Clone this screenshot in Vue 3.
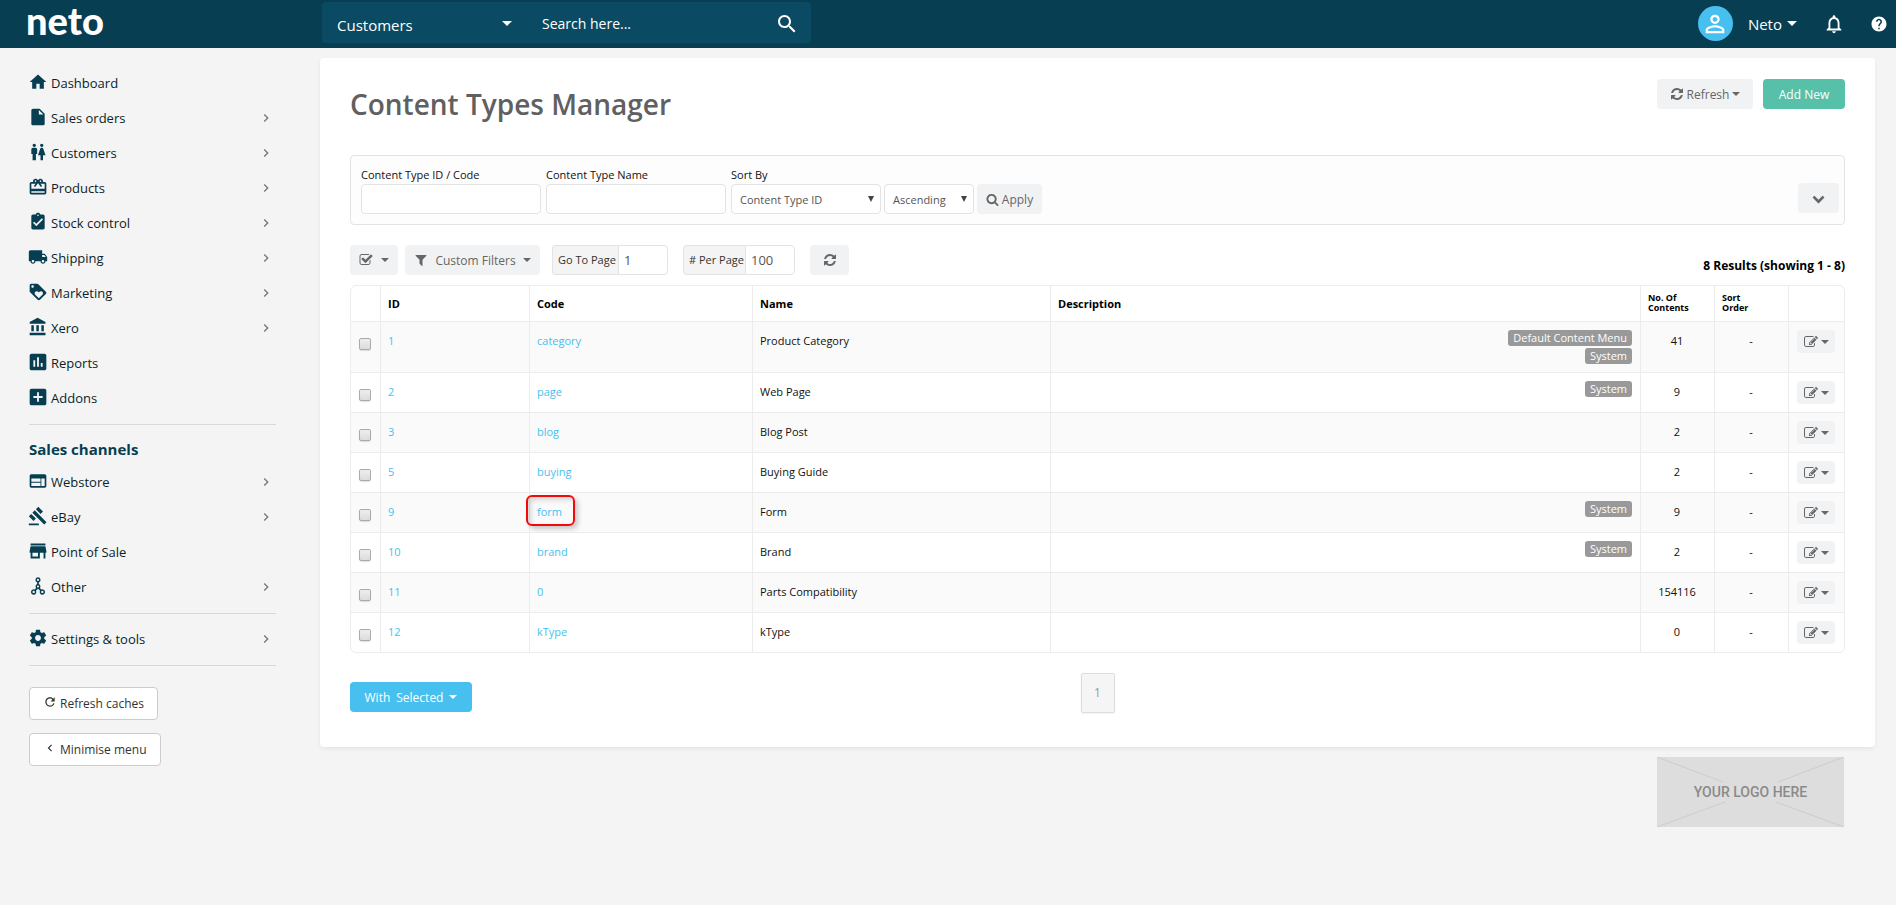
<script setup>
import { ref } from 'vue'

const icons = {
  home: 'M10 20v-6h4v6h5v-8h3L12 3 2 12h3v8z',
  file: 'M6 2c-1.1 0-1.99.9-1.99 2L4 20c0 1.1.89 2 1.99 2H18c1.1 0 2-.9 2-2V8l-6-6H6zm7 7V3.5L18.5 9H13z',
  people: 'M5.500 22v-7.500H4V9c0-1.100.9-2 2-2h3c1.100 0 2 .9 2 2v5.500H9.500V22h-4zM18 22v-6h3l-2.540-7.630C18.180 7.550 17.420 7 16.560 7h-.12c-.86 0-1.630.55-1.900 1.370L12 16h3v6h3zM7.500 6c1.110 0 2-.89 2-2s-.89-2-2-2-2 .89-2 2 .89 2 2 2zm9 0c1.110 0 2-.89 2-2s-.89-2-2-2-2 .89-2 2 .89 2 2 2z',
  gift: 'M20 6h-2.180c.11-.31.18-.65.18-1 0-1.660-1.340-3-3-3-1.050 0-1.960.54-2.500 1.350l-.5.67-.5-.68C10.960 2.540 10.050 2 9 2 7.340 2 6 3.340 6 5c0 .35.07.69.18 1H4c-1.110 0-1.990.89-1.990 2L2 19c0 1.110.89 2 2 2h16c1.110 0 2-.89 2-2V8c0-1.110-.89-2-2-2zm-5-2c.55 0 1 .45 1 1s-.45 1-1 1-1-.45-1-1 .45-1 1-1zM9 4c.55 0 1 .45 1 1s-.45 1-1 1-1-.45-1-1 .45-1 1-1zm11 15H4v-2h16v2zm0-5H4V8h5.080L7 10.830 8.620 12 11 8.760l1-1.360 1 1.360L15.380 12 17 10.830 14.920 8H20v6z',
  clipboard: 'M18 3h-3.180C14.400 1.840 13.300 1 12 1c-1.300 0-2.400.84-2.820 2H6c-1.100 0-2 .9-2 2v14c0 1.100.9 2 2 2h12c1.100 0 2-.9 2-2V5c0-1.100-.9-2-2-2zm-6 0c.55 0 1 .45 1 1s-.45 1-1 1-1-.45-1-1 .45-1 1-1zm-2 14l-4-4 1.410-1.410L10 14.170l6.590-6.590L18 9l-8 8z',
  truck: 'M20 8h-3V4H3c-1.100 0-2 .9-2 2v11h2c0 1.660 1.340 3 3 3s3-1.340 3-3h6c0 1.660 1.340 3 3 3s3-1.340 3-3h2v-5l-3-4zM6 18.500c-.83 0-1.500-.67-1.500-1.500s.67-1.500 1.500-1.500 1.500.67 1.500 1.500-.67 1.500-1.500 1.500zm13.500-9l1.960 2.500H17V9.500h2.500zm-1.500 9c-.83 0-1.500-.67-1.500-1.500s.67-1.500 1.500-1.500 1.500.67 1.500 1.500-.67 1.500-1.500 1.500z',
  tag: 'M21.410 11.580l-9-9C12.050 2.220 11.550 2 11 2H4c-1.100 0-2 .9-2 2v7c0 .55.22 1.050.59 1.420l9 9c.36.36.86.58 1.410.58.55 0 1.050-.22 1.410-.59l7-7c.37-.36.59-.86.59-1.410 0-.55-.23-1.060-.59-1.420zM5.500 7C4.670 7 4 6.330 4 5.500S4.670 4 5.500 4 7 4.670 7 5.500 6.330 7 5.500 7zm11.770 8.270L13 19.540l-4.270-4.270C8.280 14.810 8 14.190 8 13.500c0-1.380 1.120-2.500 2.500-2.500.69 0 1.320.28 1.770.74l.73.72.73-.73c.45-.45 1.080-.73 1.770-.73 1.380 0 2.500 1.120 2.500 2.500 0 .69-.28 1.320-.73 1.770z',
  bank: 'M4 10v7h3v-7H4zm6 0v7h3v-7h-3zM2 22h19v-3H2v3zm14-12v7h3v-7h-3zm-4.500-9L2 6v2h19V6l-9.500-5z',
  chart: 'M19 3H5c-1.100 0-2 .9-2 2v14c0 1.100.9 2 2 2h14c1.100 0 2-.9 2-2V5c0-1.100-.9-2-2-2zM9 17H7v-7h2v7zm4 0h-2V7h2v10zm4 0h-2v-4h2v4z',
  plus: 'M19 3H5c-1.110 0-2 .9-2 2v14c0 1.100.89 2 2 2h14c1.100 0 2-.9 2-2V5c0-1.100-.9-2-2-2zm-2 10h-4v4h-2v-4H7v-2h4V7h2v4h4v2z',
  web: 'M20 4H4c-1.100 0-1.990.9-1.990 2L2 18c0 1.100.9 2 2 2h16c1.100 0 2-.9 2-2V6c0-1.100-.9-2-2-2zm-5 14H4v-4h11v4zm0-5H4V9h11v4zm5 5h-4V9h4v9z',
  gavel: 'M1 21h12v2H1zM5.245 8.070l2.830-2.827 14.140 14.142-2.828 2.828zM12.317 1l5.657 5.656-2.830 2.830-5.654-5.660zM3.825 9.485l5.657 5.657-2.828 2.828-5.657-5.657z',
  store: 'M20 4H4v2h16V4zm1 10v-2l-1-5H4l-1 5v2h1v6h10v-6h4v6h2v-6h1zm-9 4H6v-4h6v4z',
  nodes: 'M12 1.500a3.200 3.200 0 0 1 1 6.200v1.900a3.200 3.200 0 0 1 1.300 4.900l1.600 1.800a3.200 3.200 0 1 1-1.500 1.400l-1.700-2a3.200 3.200 0 0 1-1.400 0l-1.700 2a3.200 3.200 0 1 1-1.500-1.400l1.600-1.800A3.200 3.200 0 0 1 11 9.600V7.700a3.200 3.200 0 0 1 1-6.200zm0 1.900a1.300 1.300 0 1 0 0 2.600 1.300 1.300 0 0 0 0-2.600zm0 7.900a1.300 1.300 0 1 0 0 2.600 1.300 1.300 0 0 0 0-2.600zM6.800 17.700a1.400 1.400 0 1 0 0 2.800 1.400 1.400 0 0 0 0-2.800zm10.400 0a1.400 1.400 0 1 0 0 2.800 1.400 1.400 0 0 0 0-2.800z',
  cog: 'M19.430 12.980c.04-.32.07-.64.07-.98s-.03-.66-.07-.98l2.110-1.650c.19-.15.24-.42.12-.64l-2-3.460c-.12-.22-.39-.3-.61-.22l-2.490 1c-.52-.4-1.080-.73-1.690-.98l-.38-2.650C14.460 2.180 14.250 2 14 2h-4c-.25 0-.46.18-.49.42l-.38 2.650c-.61.25-1.170.59-1.690.98l-2.490-1c-.23-.09-.49 0-.61.22l-2 3.460c-.13.22-.07.49.12.64l2.110 1.650c-.04.32-.07.65-.07.98s.03.66.07.98l-2.110 1.650c-.19.15-.24.42-.12.64l2 3.460c.12.22.39.3.61.22l2.490-1c.52.4 1.080.73 1.690.98l.38 2.650c.03.24.24.42.49.42h4c.25 0 .46-.18.49-.42l.38-2.650c.61-.25 1.170-.59 1.690-.98l2.490 1c.23.09.49 0 .61-.22l2-3.460c.12-.22.07-.49-.12-.64l-2.110-1.650zM12 15.500c-1.930 0-3.500-1.570-3.500-3.500s1.570-3.500 3.500-3.500 3.500 1.570 3.500 3.500-1.570 3.500-3.500 3.500z'
}

const tight = '1.2 1.2 21.6 21.6'

const groups = [
  {
    items: [
      { label: 'Dashboard', icon: 'home' },
      { label: 'Sales orders', icon: 'file', more: true },
      { label: 'Customers', icon: 'people', more: true },
      { label: 'Products', icon: 'gift', more: true },
      { label: 'Stock control', icon: 'clipboard', more: true },
      { label: 'Shipping', icon: 'truck', more: true },
      { label: 'Marketing', icon: 'tag', more: true },
      { label: 'Xero', icon: 'bank', more: true },
      { label: 'Reports', icon: 'chart', box: tight },
      { label: 'Addons', icon: 'plus', box: tight }
    ]
  },
  {
    title: 'Sales channels',
    items: [
      { label: 'Webstore', icon: 'web', more: true },
      { label: 'eBay', icon: 'gavel', more: true },
      { label: 'Point of Sale', icon: 'store', box: tight },
      { label: 'Other', icon: 'nodes', more: true }
    ]
  },
  { items: [{ label: 'Settings & tools', icon: 'cog', more: true }] }
]

const rows = [
  { id: 1, code: 'category', name: 'Product Category', tags: ['Default Content Menu', 'System'], count: 41 },
  { id: 2, code: 'page', name: 'Web Page', tags: ['System'], count: 9 },
  { id: 3, code: 'blog', name: 'Blog Post', tags: [], count: 2 },
  { id: 5, code: 'buying', name: 'Buying Guide', tags: [], count: 2 },
  { id: 9, code: 'form', name: 'Form', tags: ['System'], count: 9, marked: true },
  { id: 10, code: 'brand', name: 'Brand', tags: ['System'], count: 2 },
  { id: 11, code: '0', name: 'Parts Compatibility', tags: [], count: 154116 },
  { id: 12, code: 'kType', name: 'kType', tags: [], count: 0 }
]

const refreshPath = 'M1639 1056q0 5-1 7-64 268-268 434.500t-478 166.500q-146 0-282.500-55t-243.500-157l-129 129q-19 19-45 19t-45-19-19-45v-448q0-26 19-45t45-19h448q26 0 45 19t19 45-19 45l-137 137q71 66 161 102t187 36q134 0 250-65t186-179q11-17 53-117 8-23 30-23h192q13 0 22.500 9.500t9.500 22.500zm25-800v448q0 26-19 45t-45 19h-448q-26 0-45-19t-19-45 19-45l138-138q-148-137-349-137-134 0-250 65t-186 179q-11 17-53 117-8 23-30 23h-199q-13 0-22.500-9.500t-9.500-22.500v-7q65-268 270-434.500t480-166.500q146 0 284 55.500t245 156.500l130-129q19-19 45-19t45 19 19 45z'
const editPath = 'M888 1184l116-116-152-152-116 116v56h96v96h56zm440-720q-16-16-33 1l-350 350q-17 17-1 33t33-1l350-350q17-17 1-33zm80 594v190q0 119-84.500 203.500t-203.500 84.500h-832q-119 0-203.500-84.500t-84.500-203.500v-832q0-119 84.500-203.500t203.500-84.500h832q63 0 117 25 15 7 18 23 3 17-9 29l-49 49q-14 14-32 8-23-6-45-6h-832q-66 0-113 47t-47 113v832q0 66 47 113t113 47h832q66 0 113-47t47-113v-126q0-13 9-22l64-64q15-15 35-7t20 29zm-96-738l288 288-672 672h-288v-288zm444 132l-92 92-288-288 92-92q28-28 68-28t68 28l152 152q28 28 28 68t-28 68z'

const goTo = ref('1')
const perPage = ref('100')
</script>

<template>
  <div class="app">
    <header class="topbar">
      <a class="brand" href="#">neto</a>
      <form class="search" @submit.prevent>
        <div class="scope">
          <select aria-label="Search in">
            <option>Customers</option>
          </select>
          <i class="caret caret-lg"></i>
        </div>
        <input type="text" placeholder="Search here..." aria-label="Search" />
        <button type="submit" aria-label="Search">
          <svg viewBox="0 0 24 24" width="24" height="24"><path d="M15.500 14h-.79l-.28-.27C15.410 12.590 16 11.110 16 9.500 16 5.910 13.090 3 9.500 3S3 5.910 3 9.500 5.910 16 9.500 16c1.610 0 3.090-.59 4.230-1.570l.27.28v.79l5 4.990L20.490 19l-4.990-5zm-6 0C7.010 14 5 11.990 5 9.500S7.010 5 9.500 5 14 7.010 14 9.500 11.990 14 9.500 14z" /></svg>
        </button>
      </form>
      <div class="account">
        <span class="avatar">
          <svg viewBox="0 0 24 24" width="28" height="28"><path d="M12 5.900c1.160 0 2.100.94 2.100 2.100s-.94 2.100-2.100 2.100S9.900 9.160 9.900 8s.94-2.100 2.100-2.100m0 9c2.970 0 6.100 1.460 6.100 2.100v1.100H5.900V17c0-.64 3.130-2.100 6.100-2.100M12 4C9.790 4 8 5.790 8 8s1.790 4 4 4 4-1.790 4-4-1.790-4-4-4zm0 9c-2.670 0-8 1.340-8 4v3h16v-3c0-2.660-5.330-4-8-4z" /></svg>
        </span>
        <button class="user" type="button">Neto<i class="caret caret-lg"></i></button>
        <button class="bell" type="button" aria-label="Notifications">
          <svg viewBox="0 0 24 24" width="22" height="22"><path d="M12 22c1.100 0 2-.9 2-2h-4c0 1.100.9 2 2 2zm6-6v-5c0-3.070-1.630-5.640-4.500-6.320V4c0-.83-.67-1.500-1.500-1.500s-1.500.67-1.500 1.500v.68C7.640 5.360 6 7.920 6 11v5l-2 2v1h16v-1l-2-2zm-2 1H8v-6c0-2.480 1.510-4.500 4-4.500s4 2.020 4 4.500v6z" /></svg>
        </button>
        <button class="help" type="button" aria-label="Help">
          <svg viewBox="0 0 24 24" width="18" height="18"><path d="M12 2C6.480 2 2 6.480 2 12s4.480 10 10 10 10-4.480 10-10S17.520 2 12 2zm1 17h-2v-2h2v2zm2.070-7.750l-.9.92C13.450 12.900 13 13.500 13 15h-2v-.5c0-1.100.45-2.100 1.170-2.830l1.240-1.260c.37-.36.59-.86.59-1.410 0-1.100-.9-2-2-2s-2 .9-2 2H8c0-2.210 1.790-4 4-4s4 1.790 4 4c0 .88-.36 1.680-.93 2.250z" /></svg>
        </button>
      </div>
    </header>

    <div class="body">
      <nav class="sidebar">
        <section v-for="(g, i) in groups" :key="i" class="group">
          <h2 v-if="g.title">{{ g.title }}</h2>
          <ul>
            <li v-for="item in g.items" :key="item.label">
              <a href="#">
                <svg class="nav-icon" :viewBox="item.box || '0 0 24 24'" width="20" height="20"><path :d="icons[item.icon]" /></svg>
                <span>{{ item.label }}</span>
                <svg v-if="item.more" class="arrow" viewBox="0 0 24 24" width="16" height="16"><path d="M10 6L8.590 7.410 13.170 12l-4.580 4.590L10 18l6-6z" /></svg>
              </a>
            </li>
          </ul>
        </section>
        <div class="side-actions">
          <button type="button">
            <svg viewBox="0 0 24 24" width="14" height="14"><path d="M17.650 6.350C16.200 4.900 14.210 4 12 4c-4.420 0-7.990 3.580-7.990 8s3.570 8 7.990 8c3.730 0 6.840-2.550 7.730-6h-2.080c-.82 2.330-3.040 4-5.650 4-3.310 0-6-2.690-6-6s2.690-6 6-6c1.660 0 3.140.69 4.220 1.780L13 11h7V4l-2.350 2.350z" /></svg>
            Refresh caches
          </button>
          <button type="button">
            <svg viewBox="0 0 24 24" width="14" height="14"><path d="M15.410 7.410L14 6l-6 6 6 6 1.410-1.410L10.830 12z" /></svg>
            Minimise menu
          </button>
        </div>
      </nav>

      <main class="main">
        <section class="panel">
          <div class="heading">
            <h1>Content Types Manager</h1>
            <div class="heading-actions">
              <button class="btn refresh" type="button">
                <svg viewBox="0 0 1792 1792" width="14" height="14"><path :d="refreshPath" /></svg>
                Refresh<i class="caret"></i>
              </button>
              <button class="btn green" type="button">Add New</button>
            </div>
          </div>

          <form class="filters" @submit.prevent>
            <div class="field text-field">
              <label for="type-id">Content Type ID / Code</label>
              <input id="type-id" type="text" />
            </div>
            <div class="field text-field">
              <label for="type-name">Content Type Name</label>
              <input id="type-name" type="text" />
            </div>
            <div class="field">
              <label for="sort-by">Sort By</label>
              <div class="sorts">
                <div class="select sort-key">
                  <select id="sort-by"><option>Content Type ID</option></select>
                  <i class="tri"></i>
                </div>
                <div class="select sort-dir">
                  <select aria-label="Sort direction"><option>Ascending</option></select>
                  <i class="tri"></i>
                </div>
                <button class="btn apply" type="submit">
                  <svg viewBox="0 0 1792 1792" width="13" height="13"><path d="M1216 832q0-185-131.500-316.500t-316.500-131.500-316.500 131.500-131.500 316.500 131.500 316.500 316.500 131.500 316.500-131.500 131.500-316.500zm512 832q0 52-38 90t-90 38q-54 0-90-38l-343-342q-179 124-399 124-143 0-273.500-55.500t-225-150-150-225-55.500-273.500 55.500-273.500 150-225 225-150 273.500-55.500 273.500 55.500 225 150 150 225 55.500 273.500q0 220-124 399l343 343q37 37 37 90z" /></svg>
                  Apply
                </button>
              </div>
            </div>
            <button class="btn expand" type="button" aria-label="More filters">
              <svg viewBox="0 0 1792 1792" width="13" height="13"><path d="M1683 808l-742 741q-19 19-45 19t-45-19l-742-741q-19-19-19-45.500t19-45.500l166-165q19-19 45-19t45 19l531 531 531-531q19-19 45-19t45 19l166 165q19 19 19 45.500t-19 45.500z" /></svg>
            </button>
          </form>

          <div class="toolbar">
            <button class="btn check-btn" type="button" aria-label="Select rows">
              <svg viewBox="0 0 1792 1792" width="14" height="14"><path d="M1472 930v318q0 119-84.500 203.500t-203.500 84.500h-832q-119 0-203.500-84.500t-84.500-203.500v-832q0-119 84.500-203.500t203.500-84.500h832q63 0 117 25 15 7 18 23 3 17-9 29l-49 49q-10 10-23 10-3 0-9-2-23-6-45-6h-832q-66 0-113 47t-47 113v832q0 66 47 113t113 47h832q66 0 113-47t47-113v-254q0-13 9-22l64-64q10-10 23-10 6 0 12 3 20 8 20 29zm231-489l-814 814q-24 24-57 24t-57-24l-430-430q-24-24-24-57t24-57l110-110q24-24 57-24t57 24l263 263 647-647q24-24 57-24t57 24l110 110q24 24 24 57t-24 57z" /></svg>
              <i class="caret"></i>
            </button>
            <button class="btn custom" type="button">
              <svg viewBox="0 0 1792 1792" width="14" height="14"><path d="M1595 295q17 41-14 70l-493 493v742q0 42-39 59-13 5-25 5-27 0-45-19l-256-256q-19-19-19-45v-486l-493-493q-31-29-14-70 17-39 59-39h1280q42 0 59 39z" /></svg>
              <span>Custom Filters</span>
              <i class="caret"></i>
            </button>
            <div class="addon go">
              <label for="go-to">Go To Page</label>
              <input id="go-to" v-model="goTo" type="text" />
            </div>
            <div class="addon per">
              <label for="per-page"># Per Page</label>
              <input id="per-page" v-model="perPage" type="text" />
            </div>
            <button class="btn reload" type="button" aria-label="Reload">
              <svg viewBox="0 0 1792 1792" width="14" height="14"><path :d="refreshPath" /></svg>
            </button>
            <strong class="results">8 Results (showing 1 - 8)</strong>
          </div>

          <div class="table-wrap">
            <table>
              <colgroup>
                <col class="c-check" />
                <col class="c-id" />
                <col class="c-code" />
                <col class="c-name" />
                <col />
                <col class="c-num" />
                <col class="c-num" />
                <col class="c-act" />
              </colgroup>
              <thead>
                <tr>
                  <th></th>
                  <th>ID</th>
                  <th>Code</th>
                  <th>Name</th>
                  <th>Description</th>
                  <th class="small">No. Of<br />Contents</th>
                  <th class="small">Sort<br />Order</th>
                  <th></th>
                </tr>
              </thead>
              <tbody>
                <tr v-for="r in rows" :key="r.id">
                  <td class="check"><input type="checkbox" :aria-label="'Select ' + r.name" /></td>
                  <td><a href="#">{{ r.id }}</a></td>
                  <td class="code"><a href="#">{{ r.code }}</a><i v-if="r.marked" class="marker"></i></td>
                  <td>{{ r.name }}</td>
                  <td>
                    <div class="tags"><span v-for="t in r.tags" :key="t" class="tag">{{ t }}</span></div>
                  </td>
                  <td class="num">{{ r.count }}</td>
                  <td class="num">-</td>
                  <td>
                    <button class="btn edit" type="button" :aria-label="'Edit ' + r.name">
                      <svg viewBox="0 0 1792 1792" width="14" height="14"><path :d="editPath" /></svg>
                      <i class="caret"></i>
                    </button>
                  </td>
                </tr>
              </tbody>
            </table>
          </div>

          <div class="footer">
            <button class="btn blue" type="button"><span>With</span><span>Selected</span><i class="caret"></i></button>
            <a class="page" href="#">1</a>
          </div>
        </section>

        <div class="logo-slot">
          <svg viewBox="0 0 187 70" preserveAspectRatio="none" aria-hidden="true">
            <path d="M0 0L66 25M187 0L121 25M0 70L68 45M187 70L119 45" fill="none" stroke="#cccccc" />
          </svg>
          <span>YOUR LOGO HERE</span>
        </div>
      </main>
    </div>
  </div>
</template>

<style>
body {
  background: #f4f4f4;
}
</style>

<style scoped>
* {
  box-sizing: border-box;
}
.app {
  font-family: "Open Sans", "Noto Sans", sans-serif;
  font-size: 12px;
  color: #111;
}
svg {
  display: block;
  flex: none;
  fill: currentColor;
}
a {
  color: #47bfef;
  text-decoration: none;
}
button,
input,
select {
  font: inherit;
  color: inherit;
  margin: 0;
}
button {
  cursor: pointer;
}
.caret {
  display: inline-block;
  flex: none;
  border: 4px solid transparent;
  border-top-color: currentColor;
  border-bottom: 0;
}
.caret-lg {
  border-width: 5px;
  border-bottom: 0;
}

/* Top bar */
.topbar {
  display: flex;
  align-items: flex-start;
  height: 48px;
  background: #073e51;
  color: #fff;
}
.brand {
  width: 322px;
  padding-left: 26px;
  font: 900 38px/40px Lato, sans-serif;
  color: #fff;
}
.search {
  display: flex;
  align-items: center;
  width: 489px;
  height: 41px;
  margin-top: 2px;
  background: #0a4b63;
  border-radius: 4px;
}
.scope {
  position: relative;
  width: 205px;
}
.scope select {
  width: 100%;
  height: 41px;
  padding: 4px 16px 0 15px;
  appearance: none;
  border: 0;
  background: none;
  font-size: 15px;
}
.scope .caret {
  position: absolute;
  right: 15px;
  top: 19px;
}
.search input {
  flex: 1;
  min-width: 0;
  height: 41px;
  padding: 2px 15px 0;
  border: 0;
  background: none;
  font-size: 14px;
}
.search input::placeholder {
  color: #fff;
  opacity: 1;
}
.search button {
  padding: 2px 0 0;
  margin-right: 12px;
  border: 0;
  background: none;
}
.account {
  display: flex;
  align-items: center;
  height: 47px;
  margin-left: auto;
  padding-right: 8px;
}
.account button {
  display: flex;
  align-items: center;
  padding: 0;
  border: 0;
  background: none;
}
.avatar {
  display: grid;
  place-items: center;
  width: 35px;
  height: 35px;
  border-radius: 50%;
  background: #47bfef;
}
.account .user {
  gap: 5px;
  margin-left: 15px;
  font-size: 15px;
}
.account .bell {
  margin-left: 26px;
}
.account .help {
  margin-left: 25px;
}

/* Sidebar */
.body {
  display: flex;
  align-items: flex-start;
}
.sidebar {
  flex: none;
  width: 320px;
  padding: 17px 44px 20px 29px;
}
.group {
  border-bottom: 1px solid #d8d8d8;
  padding-bottom: 9px;
}
.group + .group {
  padding-top: 7px;
}
.group h2 {
  margin: 7px 0 5px;
  font-size: 15px;
  line-height: 20px;
  font-weight: 700;
  color: #073e51;
}
ul {
  margin: 0;
  padding: 0;
  list-style: none;
}
li a {
  display: flex;
  align-items: center;
  height: 35px;
  padding-right: 2px;
  font-size: 13px;
  color: #0b1f28;
}
.nav-icon {
  margin: 0 3px 2px -1px;
  color: #073e51;
}
.arrow {
  margin-left: auto;
  color: #777;
}
.side-actions {
  display: flex;
  flex-direction: column;
  align-items: flex-start;
  gap: 13px;
  margin-top: 21px;
}
.side-actions button {
  display: flex;
  align-items: center;
  gap: 3px;
  height: 33px;
  padding: 0 13px;
  border: 1px solid #ccc;
  border-radius: 4px;
  background: #fff;
  color: #333;
}
.side-actions svg {
  margin-bottom: 3px;
}

/* Main panel */
.main {
  flex: 1;
  min-width: 0;
  padding: 10px 21px 20px 0;
}
.panel {
  padding: 21px 30px 34px;
  background: #fff;
  border-radius: 4px;
  box-shadow: 0 2px 4px rgba(0, 0, 0, 0.06);
}
.heading {
  display: flex;
  justify-content: space-between;
  align-items: flex-start;
  height: 76px;
}
h1 {
  margin: 7px 0 0;
  font-size: 28px;
  line-height: 36px;
  font-weight: 600;
  color: #606060;
}
.heading-actions {
  display: flex;
  gap: 10px;
}
.btn {
  display: flex;
  align-items: center;
  justify-content: center;
  height: 30px;
  padding: 0;
  border: 0;
  border-radius: 4px;
  background: #f1f2f4;
  color: #666;
  font-size: 12px;
}
.refresh {
  width: 96px;
  gap: 3px;
}
.green {
  width: 82px;
  background: #56c0a8;
  color: #fff;
}
.filters {
  display: flex;
  align-items: flex-start;
  gap: 5px;
  height: 70px;
  padding: 9px 5px 0 10px;
  border: 1px solid #e3e3e3;
  border-radius: 4px;
  background: #fdfdfd;
}
.text-field {
  width: 180px;
}
.field label {
  display: block;
  line-height: 19px;
  font-size: 11px;
}
.field input,
.select select,
.addon input {
  width: 100%;
  height: 30px;
  padding: 0 8px;
  border: 1px solid #e3e3e3;
  border-radius: 4px;
  background: #fff;
  color: #555;
}
.field input {
  display: block;
}
.sorts {
  display: flex;
  gap: 3px;
}
.select {
  position: relative;
}
.select select {
  display: block;
  appearance: none;
  font-size: 11px;
}
.sort-key {
  width: 150px;
}
.sort-dir {
  width: 90px;
}
.tri {
  position: absolute;
  right: 7px;
  top: 12px;
  border: 3px solid transparent;
  border-top: 6px solid #444;
  border-bottom: 0;
}
.apply {
  width: 65px;
  gap: 3px;
}
.expand {
  width: 41px;
  margin-left: auto;
  margin-top: 18px;
}
.toolbar {
  display: flex;
  height: 30px;
  margin: 20px 0 10px;
}
.check-btn {
  width: 48px;
  gap: 8px;
}
.custom {
  width: 135px;
  gap: 7px;
  margin-left: 7px;
}
.addon {
  display: flex;
}
.addon label {
  flex: none;
  padding-left: 5px;
  border: 1px solid #e3e3e3;
  border-right: 0;
  border-radius: 4px 0 0 4px;
  background: #f4f4f4;
  font-size: 11px;
  line-height: 28px;
  color: #333;
}
.addon input {
  flex: 1;
  min-width: 0;
  padding: 0 5px;
  border-radius: 0 4px 4px 0;
  font-size: 13px;
}
.go {
  width: 116px;
  margin-left: 12px;
}
.go label {
  width: 66px;
}
.per {
  width: 112px;
  margin-left: 15px;
}
.per label {
  width: 62px;
}
.reload {
  width: 39px;
  margin-left: 15px;
}
.results {
  margin-left: auto;
  align-self: flex-end;
  line-height: 18px;
  font-size: 12px;
  color: #000;
}

/* Table */
.table-wrap {
  border: 1px solid #ececec;
  border-radius: 6px;
  overflow: hidden;
}
table {
  width: 100%;
  table-layout: fixed;
  border-collapse: separate;
  border-spacing: 0;
}
.c-check {
  width: 29px;
}
.c-id {
  width: 149px;
}
.c-code {
  width: 223px;
}
.c-name {
  width: 298px;
}
.c-num {
  width: 74px;
}
.c-act {
  width: 56px;
}
th {
  height: 35px;
  padding: 0 7px;
  text-align: left;
  font-size: 11px;
  line-height: 14px;
  font-weight: 700;
  color: #000;
}
th.small {
  font-size: 9px;
  line-height: 10px;
  padding-bottom: 2px;
}
td {
  height: 40px;
  padding: 8px 8px 8px 7px;
  vertical-align: top;
  border-top: 1px solid #ececec;
  font-size: 11px;
  line-height: 22px;
}
th + th,
td + td {
  border-left: 1px solid #ececec;
}
tbody tr:nth-child(odd) {
  background: #fafafa;
}
.num {
  text-align: center;
}
.check {
  padding-left: 8px;
}
.check input {
  appearance: none;
  display: block;
  width: 12px;
  height: 12px;
  margin-top: 8px;
  border: 1px solid #aaa;
  border-radius: 2px;
  background: linear-gradient(#eee, #dcdcdc);
  box-shadow: 0 1px 1px rgba(0, 0, 0, 0.12);
}
.code {
  position: relative;
}
.marker {
  position: absolute;
  left: -4px;
  top: 2px;
  width: 49px;
  height: 31px;
  border: 2px solid #f00b0b;
  border-radius: 6px;
  box-shadow: 3px 3px 5px rgba(0, 0, 0, 0.2), inset 3px 3px 5px rgba(0, 0, 0, 0.15);
  pointer-events: none;
}
.tags {
  display: flex;
  flex-direction: column;
  align-items: flex-end;
  gap: 2px;
}
.tag {
  padding: 0 5px;
  border-radius: 3px;
  background: #999;
  color: #fff;
  line-height: 16px;
}
.edit {
  width: 38px;
  height: 23px;
  margin-left: 1px;
  gap: 3px;
}

/* Footer */
.footer {
  display: grid;
  grid-template-columns: 1fr auto 1fr;
  align-items: end;
  margin-top: 20px;
}
.blue {
  width: 122px;
  gap: 6px;
  margin-bottom: 1px;
  background: #47bfef;
  color: #fff;
}
.page {
  width: 34px;
  height: 40px;
  border: 1px solid #ddd;
  border-radius: 2px;
  background: #f5f5f5;
  color: #999;
  line-height: 38px;
  text-align: center;
  box-shadow: 0 1px 2px rgba(0, 0, 0, 0.05);
}
.logo-slot {
  position: relative;
  display: grid;
  place-items: center;
  width: 187px;
  height: 70px;
  margin: 10px 31px 0 auto;
  background: #ddd;
  color: #8a8a8a;
  font: 500 14px/16px Roboto, sans-serif;
}
.logo-slot svg {
  position: absolute;
  inset: 0;
  width: 100%;
  height: 100%;
}
</style>
